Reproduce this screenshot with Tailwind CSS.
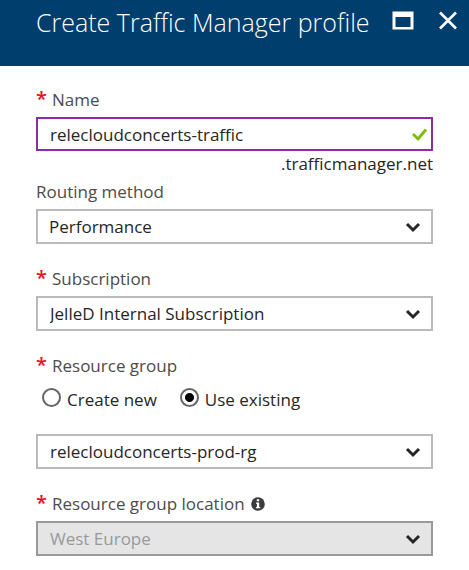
<!DOCTYPE html>
<html lang="en">
<head>
<meta charset="utf-8">
<meta name="viewport" content="width=device-width, initial-scale=1">
<title>Create Traffic Manager profile</title>
<script src="https://cdn.jsdelivr.net/npm/@tailwindcss/browser@4"></script>
</head>
<body class="bg-white font-['Open_Sans','Noto_Sans',sans-serif] text-[17px] leading-6 text-[#262626]">
<header class="flex h-[66px] items-start justify-between bg-[#003e6d] pl-9 pr-[11px] pt-1 text-white">
  <h1 class="whitespace-nowrap text-[25px] font-light leading-9">Create Traffic Manager profile</h1>
  <div class="flex gap-6 pt-[7px]">
    <button type="button" aria-label="Maximize" class="block">
      <svg class="block h-5 w-[22px]" viewBox="0 0 22 20" fill="currentColor"><path fill-rule="evenodd" d="M0.500 0.500H21.500V18.500H0.500ZM3.500 6V16H18.500V6Z"/></svg>
    </button>
    <button type="button" aria-label="Close" class="block">
      <svg class="block h-5 w-5" viewBox="0 0 20 20" fill="none" stroke="currentColor" stroke-width="2.600"><path d="M2 1.500L18 17.500M18 1.500L2 17.500"/></svg>
    </button>
  </div>
</header>
<form class="px-9 pt-[22px]">
  <div>
    <label for="name" class="flex text-[#4c4c4c]"><span class="w-4 text-[20px] font-semibold leading-[22px] text-[#e81123]">*</span>Name</label>
    <div class="relative mt-[5px]">
      <input id="name" type="text" value="relecloudconcerts-traffic" class="block h-[34px] w-full border-2 border-[#8a2da5] bg-white pl-3 pr-8 outline-none">
      <svg class="pointer-events-none absolute right-[5px] top-2.5 h-4 w-[18px]" viewBox="0 0 18 16" fill="none" stroke="#7fba00" stroke-width="2.800"><path d="M3 7L8 12L16 2.500"/></svg>
    </div>
    <p class="mt-px text-right">.trafficmanager.net</p>
  </div>
  <div class="mt-1">
    <label for="routing" class="block text-[#4c4c4c]">Routing method</label>
    <div class="relative mt-[5px]">
      <select id="routing" class="block h-[35px] w-full appearance-none border-2 border-[#bababa] bg-white pl-[11px] pr-10"><option>Performance</option></select>
      <svg class="pointer-events-none absolute right-3 top-3 h-3 w-4" viewBox="0 0 16 12" fill="none" stroke="#262626" stroke-width="3"><path d="M2 3L8 9L14 3"/></svg>
    </div>
  </div>
  <div class="mt-[23px]">
    <label for="subscription" class="flex text-[#4c4c4c]"><span class="w-4 text-[20px] font-semibold leading-[22px] text-[#e81123]">*</span>Subscription</label>
    <div class="relative mt-[5px]">
      <select id="subscription" class="block h-[35px] w-full appearance-none border-2 border-[#bababa] bg-white pl-3 pr-10"><option>JelleD Internal Subscription</option></select>
      <svg class="pointer-events-none absolute right-3 top-3 h-3 w-4" viewBox="0 0 16 12" fill="none" stroke="#262626" stroke-width="3"><path d="M2 3L8 9L14 3"/></svg>
    </div>
  </div>
  <fieldset class="mt-[23px]">
    <legend class="flex text-[#4c4c4c]"><span class="w-4 text-[20px] font-semibold leading-[22px] text-[#e81123]">*</span>Resource group</legend>
    <div class="flex gap-[23px] pl-1.5 pt-2">
      <label class="flex items-start gap-1.5 leading-7"><input type="radio" name="group" class="mt-0.5 size-[19px] appearance-none rounded-full border-2 border-[#666] checked:bg-[radial-gradient(circle,#000_4px,transparent_5px)]">Create new</label>
      <label class="flex items-start gap-1.5 leading-7"><input type="radio" name="group" checked class="mt-0.5 size-[19px] appearance-none rounded-full border-2 border-[#666] checked:bg-[radial-gradient(circle,#000_4px,transparent_5px)]">Use existing</label>
    </div>
    <div class="relative mt-5">
      <select id="group" aria-label="Existing resource group" class="block h-[35px] w-full appearance-none border-2 border-[#bababa] bg-white pl-3 pr-10"><option>relecloudconcerts-prod-rg</option></select>
      <svg class="pointer-events-none absolute right-3 top-3 h-3 w-4" viewBox="0 0 16 12" fill="none" stroke="#262626" stroke-width="3"><path d="M2 3L8 9L14 3"/></svg>
    </div>
  </fieldset>
  <div class="mt-[23px]">
    <label for="location" class="flex text-[#4c4c4c]"><span class="w-4 text-[20px] font-semibold leading-[22px] text-[#e81123]">*</span>Resource group location
      <svg class="ml-1.5 size-[14px] self-center" viewBox="0 0 14 14"><circle cx="7" cy="7" r="6.800" fill="#3c3c3c"/><path fill="#fff" d="M5.800 2.300H8.200V4.300H5.800ZM5 5.500H8.200V10H9.200V11.300H4.900V10H5.900V6.800H5Z"/></svg>
    </label>
    <div class="relative mt-[5px]">
      <select id="location" disabled class="block h-[35px] w-full appearance-none border-2 border-[#999] bg-[#e5e5e5] pl-3 pr-10 text-[#999] opacity-100"><option>West Europe</option></select>
      <svg class="pointer-events-none absolute right-3 top-3 h-3 w-4" viewBox="0 0 16 12" fill="none" stroke="#262626" stroke-width="3"><path d="M2 3L8 9L14 3"/></svg>
    </div>
  </div>
</form>
</body>
</html>
